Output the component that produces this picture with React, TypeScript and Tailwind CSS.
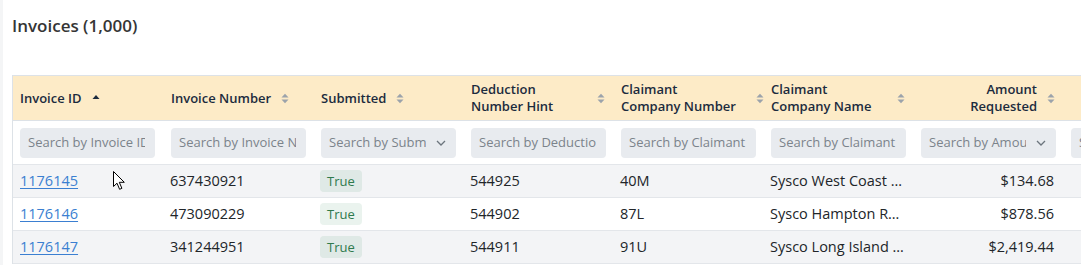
import React from "react";

type Col = {
  label: string[];
  align?: "right";
  sort?: "asc" | "none";
  filter: string;
  select?: boolean;
};

const cols: Col[] = [
  { label: ["Invoice ID"], sort: "asc", filter: "Search by Invoice ID" },
  { label: ["Invoice Number"], filter: "Search by Invoice Number" },
  { label: ["Submitted"], filter: "Search by Submitted", select: true },
  { label: ["Deduction", "Number Hint"], filter: "Search by Deduction Number Hint" },
  { label: ["Claimant", "Company Number"], filter: "Search by Claimant Company Number" },
  { label: ["Claimant", "Company Name"], filter: "Search by Claimant Company Name" },
  { label: ["Amount", "Requested"], align: "right", filter: "Search by Amount Requested", select: true },
  { label: [], filter: "Search by Status" },
];

const rows = [
  { id: "1176145", num: "637430921", hint: "544925", cnum: "40M", cname: "Sysco West Coast Florida", amt: "$134.68" },
  { id: "1176146", num: "473090229", hint: "544902", cnum: "87L", cname: "Sysco Hampton Roads", amt: "$878.56" },
  { id: "1176147", num: "341244951", hint: "544911", cnum: "91U", cname: "Sysco Long Island Inc", amt: "$2,419.44" },
];

function SortIcon({ dir }: { dir?: "asc" | "none" }) {
  if (dir === "asc") {
    return (
      <svg width="8" height="10" viewBox="0 0 8 10" className="shrink-0">
        <path d="M0.5 6 L4 2 L7.5 6 Z" fill="#1c2b3e" />
      </svg>
    );
  }
  return (
    <svg width="8" height="11" viewBox="0 0 8 11" className="shrink-0">
      <path d="M0.5 4.5 L4 0.8 L7.5 4.5 Z" fill="#9ca3ab" />
      <path d="M0.5 6.5 L4 10.2 L7.5 6.5 Z" fill="#9ca3ab" />
    </svg>
  );
}

function Chevron() {
  return (
    <svg width="10" height="6" viewBox="0 0 10 6" className="shrink-0">
      <path d="M1 1 L5 5 L9 1" fill="none" stroke="#6c757d" strokeWidth="1.3" />
    </svg>
  );
}

function Cursor() {
  return (
    <svg
      width="13"
      height="20"
      viewBox="0 0 13 20"
      className="absolute left-[113px] top-[171px] pointer-events-none"
    >
      <path
        d="M0.5 0.5 L0.5 15.5 L4 12.2 L6.6 18.3 L8.9 17.3 L6.3 11.3 L11.3 11.3 Z"
        fill="#ffffff"
        stroke="#000000"
        strokeWidth="1"
        strokeLinejoin="round"
      />
    </svg>
  );
}

export default function App() {
  return (
    <div
      className="relative flex h-[265px] w-[1081px] overflow-hidden bg-white"
      style={{ fontFamily: '"Open Sans", "Liberation Sans", sans-serif' }}
    >
      <div className="w-[3px] shrink-0 bg-[#f4f5f6]" />
      <div className="flex min-w-0 flex-1 flex-col pl-[9px] pt-[14px]">
        <h2 className="text-[17px] leading-[24px] font-semibold text-[#353535]">Invoices (1,000)</h2>

        <div className="mt-[37px] w-max border-l border-t border-[#dde2e7]">
          {/* header */}
          <div className="flex h-[45px] border-b border-[#dde2e7] bg-[#fdebc7]">
            {cols.map((c, i) => (
              <div
                key={i}
                className={`flex w-[150px] shrink-0 items-center gap-[10px] pr-2 ${i === 0 ? "w-[149px] pl-[7px]" : "pl-2"} ${c.align === "right" ? "justify-end" : ""}`}
              >
                {c.label.length > 0 && (
                  <>
                    <span
                      className={`text-[13px] leading-[17px] font-semibold whitespace-nowrap text-[#1c2b3e] ${c.align === "right" ? "text-right" : ""}`}
                    >
                      {c.label.map((l, j) => (
                        <span key={j} className="block">
                          {l}
                        </span>
                      ))}
                    </span>
                    {c.label.length > 1 && c.align !== "right" && <span className="flex-1" />}
                    <SortIcon dir={c.sort} />
                  </>
                )}
              </div>
            ))}
          </div>

          {/* filters */}
          <div className="flex h-[44px] items-center border-b border-[#e3e6ea] bg-white pt-[1px]">
            {cols.map((c, i) => (
              <div key={i} className={`w-[150px] shrink-0 pr-2 ${i === 0 ? "w-[149px] pl-[7px]" : "pl-2"}`}>
                <div className="flex h-[30px] w-[135px] items-center rounded-[4px] bg-[#e8ebef] pl-2 pr-[10px]">
                  <input
                    readOnly
                    placeholder={c.filter}
                    className="min-w-0 flex-1 bg-transparent text-[13px] text-[#343a40] outline-none placeholder:text-[#7b838b]"
                  />
                  {c.select && (
                    <span className="ml-[10px]">
                      <Chevron />
                    </span>
                  )}
                </div>
              </div>
            ))}
          </div>

          {/* rows */}
          {rows.map((r, i) => (
            <div
              key={r.id}
              className={`flex h-[33px] items-center border-b border-[#e3e6ea] text-[14.5px] text-[#212529] ${i % 2 === 0 ? "bg-[#f3f4f6]" : "bg-white"}`}
            >
              <div className="w-[149px] shrink-0 pl-[7px]">
                <a href="#" className="text-[#3b7fd1] underline underline-offset-2">
                  {r.id}
                </a>
              </div>
              <div className="w-[150px] shrink-0 px-2">{r.num}</div>
              <div className="w-[150px] shrink-0 px-2">
                <span className="inline-flex h-[22px] items-center rounded-[4px] bg-[#2e8b57]/10 px-[7px] text-[13px] text-[#2f7a4d]">
                  True
                </span>
              </div>
              <div className="w-[150px] shrink-0 px-2">{r.hint}</div>
              <div className="w-[150px] shrink-0 px-2">{r.cnum}</div>
              <div className="w-[150px] shrink-0 truncate px-2">{r.cname}</div>
              <div className="w-[150px] shrink-0 px-2 text-right">{r.amt}</div>
              <div className="w-[150px] shrink-0 px-2" />
            </div>
          ))}
        </div>
      </div>
      <Cursor />
    </div>
  );
}
